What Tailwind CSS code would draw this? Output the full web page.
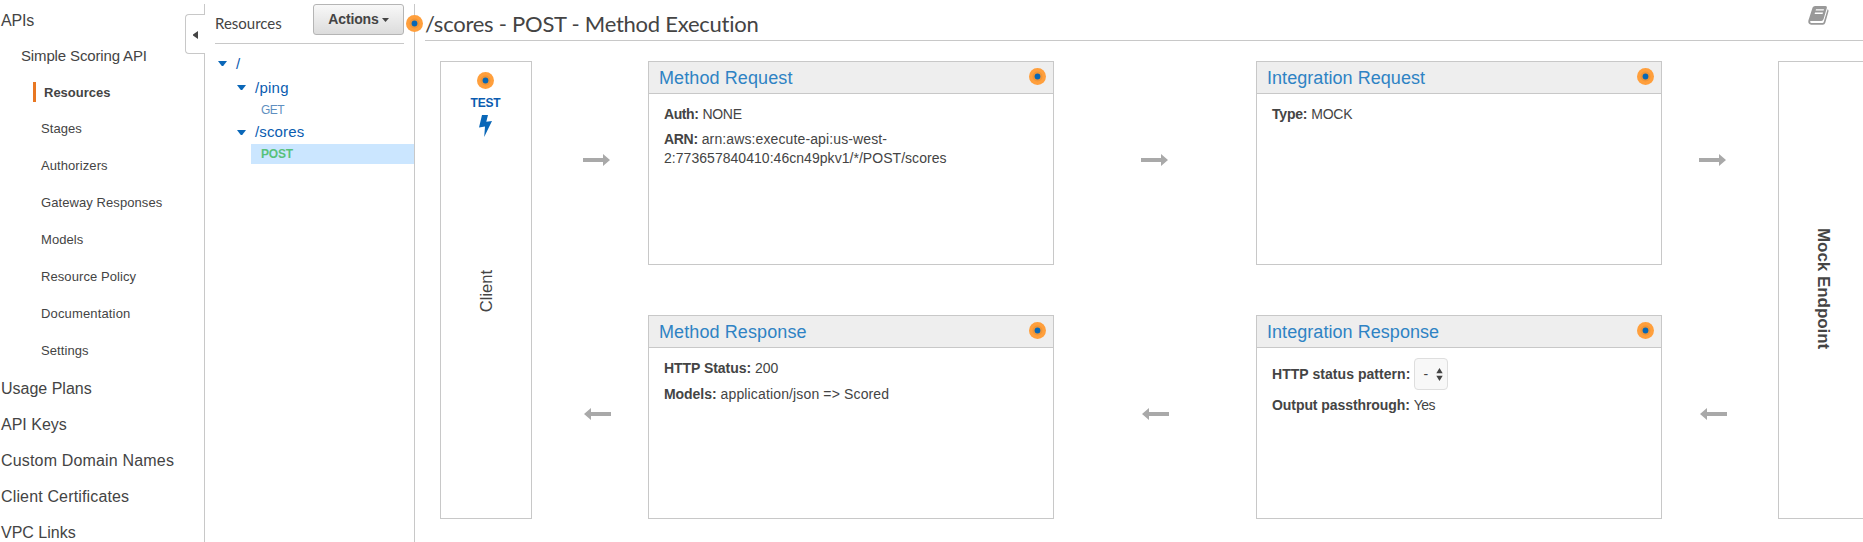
<!DOCTYPE html>
<html lang="en">
<head>
<meta charset="utf-8">
<title>API Gateway</title>
<script src="https://cdn.jsdelivr.net/npm/@tailwindcss/browser@4"></script>
</head>
<body class="bg-white font-['Liberation_Sans',Arial,sans-serif] text-[#444]">
<svg class="hidden">
  <symbol id="dot" viewBox="0 0 17 17"><circle cx="8.5" cy="8.5" r="8.5" fill="#ff9f3c"/><circle cx="8.5" cy="8.5" r="5" fill="#f09536"/><circle cx="8.5" cy="8.5" r="2.9" fill="#0867b5"/></symbol>
  <symbol id="right" viewBox="0 0 27 12"><path d="M0 4h20V0l7 6-7 6V8H0z" fill="#a9a9a9"/></symbol>
  <symbol id="left" viewBox="0 0 27 12"><path d="M27 4H7V0L0 6l7 6V8h20z" fill="#a9a9a9"/></symbol>
  <symbol id="caret" viewBox="0 0 9 5"><path d="M0 0h9L5.200 5H3.800z" fill="#0a67b8"/></symbol>
</svg>
<div class="flex h-[542px] w-[1863px] overflow-hidden">

  <nav class="flex w-[185px] shrink-0 flex-col pt-0.5 text-[16px]">
    <div class="flex h-9 shrink-0 items-center pt-0.5 pl-px tracking-[-0.15px]">APIs</div>
    <div class="flex h-9 shrink-0 items-center pl-[21px] text-[15px] tracking-[-0.14px]">Simple Scoring API</div>
    <div class="flex h-9 shrink-0 items-center pl-[33px] text-[13px] font-bold"><span class="flex h-5 items-center border-l-3 border-[#e87722] pt-px pl-2">Resources</span></div>
    <div class="flex shrink-0 flex-col pl-[41px] text-[13px] tracking-[0.08px]">
      <div class="flex h-[37px] items-center">Stages</div>
      <div class="flex h-[37px] items-center">Authorizers</div>
      <div class="flex h-[37px] items-center">Gateway Responses</div>
      <div class="flex h-[37px] items-center">Models</div>
      <div class="flex h-[37px] items-center">Resource Policy</div>
      <div class="flex h-[37px] items-center tracking-[0.15px]">Documentation</div>
      <div class="flex h-[37px] items-center">Settings</div>
    </div>
    <div class="mt-0.5 flex shrink-0 flex-col pl-px">
      <div class="flex h-9 items-center">Usage Plans</div>
      <div class="flex h-9 items-center">API Keys</div>
      <div class="flex h-9 items-center tracking-[0.17px]">Custom Domain Names</div>
      <div class="flex h-9 items-center tracking-[0.15px]">Client Certificates</div>
      <div class="flex h-9 items-center whitespace-nowrap">VPC Links</div>
    </div>
  </nav>

  <!-- collapse handle and divider -->
  <div class="flex w-5 shrink-0 flex-col">
    <div class="mt-1 h-[10px] w-5 border-r border-[#c8c8c8]"></div>
    <div class="flex h-10 w-5 items-center rounded-l border border-r-0 border-[#c8c8c8] pl-[7px]">
      <svg class="mt-0.5 h-2 w-[5px]" viewBox="0 0 5 8"><path d="M5 0v8L0 4.5v-1z" fill="#444"/></svg>
    </div>
    <div class="w-5 flex-1 border-r border-[#c8c8c8]"></div>
  </div>

  <section class="relative flex w-[210px] shrink-0 flex-col pt-1">
    <div class="mr-[11px] ml-[10px] flex h-10 items-start justify-between border-b border-[#c8c8c8]">
      <h2 class="mt-2 font-[Lato] text-[15px] leading-[22px]">Resources</h2>
      <button class="flex h-[31px] w-[91px] items-center justify-center gap-[3px] rounded-[3px] border border-[#b5b5b5] bg-linear-to-b from-[#f8f8f8] to-[#dcdcdc] text-[14px] font-bold tracking-[-0.15px]">Actions
        <svg class="mt-px h-1 w-[7px]" viewBox="0 0 7 4"><path d="M0 0h7L3.5 4z" fill="#444"/></svg>
      </button>
    </div>
    <div class="flex flex-col text-[15px] text-[#0a5cb0]">
      <div class="mt-[9px] flex h-[22px] items-center gap-[9px] pl-[13px]"><svg class="mb-px h-[5px] w-[9px]"><use href="#caret"/></svg>/</div>
      <div class="mt-0.5 flex h-[22px] items-center gap-[9px] pl-8"><svg class="mb-px h-[5px] w-[9px]"><use href="#caret"/></svg><span class="tracking-[0.25px]">/ping</span></div>
      <div class="mt-px flex h-5 items-center pl-14 text-[12px] tracking-[-0.5px] text-[#5f8fc0]">GET</div>
      <div class="mt-px flex h-[23px] items-center gap-[9px] pl-8"><svg class="h-[5px] w-[9px]"><use href="#caret"/></svg><span class="tracking-[0.15px]">/scores</span></div>
      <div class="ml-[46px] flex h-5 items-center bg-[#cbe6ff] pl-[10px] text-[12px] font-bold tracking-[-0.17px] text-[#57c17b]">POST</div>
    </div>
    <div class="absolute top-1 right-0 bottom-0 w-px bg-[#c8c8c8]"></div>
    <svg class="absolute top-[15px] -right-2 z-10 size-[17px]"><use href="#dot"/></svg>
  </section>

  <main class="flex min-w-0 flex-1 flex-col pl-[10px]">
    <header class="flex h-[41px] items-center justify-between border-b border-[#c8c8c8] pt-[7px]">
      <h1 class="font-[Lato] text-[22px] leading-8 tracking-[-0.25px] whitespace-nowrap">/scores - POST - Method Execution</h1>
      <svg class="mr-[34px] mb-[17px] h-[19px] w-[21px] shrink-0" viewBox="0 0 21 19"><path fill-rule="evenodd" d="M7 0h10.500q1.800 0 1.400 1.800L15.600 13q-.6 2-2.400 2H3q-1.300 0-.8 1.200.3.800 1.300.800h11q1 0 1.300-1.200L19.600 3.300q1.200.6.900 1.900L17.300 16.700q-.7 2-2.400 2H3.200Q0 18.200.3 15.100Q.6 13.400 1.200 12L4.600 1.600Q5.300 0 7 0zM8 3.300l-.4 1.300h8l.4-1.300zM7 6.600l-.4 1.300h8l.4-1.300z" fill="#999"/></svg>
    </header>

    <div class="mt-5 ml-[15px] flex h-[458px]">
      <div class="flex w-[92px] shrink-0 flex-col items-center border border-[#c8c8c8] pt-[10px] pr-px">
        <svg class="size-[17px]"><use href="#dot"/></svg>
        <div class="mt-[6px] text-[12px] leading-4 font-bold tracking-[-0.15px] text-[#0a5cb0]">TEST</div>
        <svg class="mt-1 h-[22px] w-[13px]" viewBox="0 0 13 22"><path d="M3 0h6L7.300 6.700 13 6 5.200 22 6 11.500 0 12.500z" fill="#0a67b8"/></svg>
        <div class="mt-[133px] rotate-180 text-[16.5px] leading-5 [writing-mode:vertical-rl]">Client</div>
      </div>

      <div class="flex w-[116px] shrink-0 flex-col pt-[93px] pl-[51px]">
        <svg class="h-3 w-[27px]"><use href="#right"/></svg>
        <svg class="mt-[242px] ml-px h-3 w-[27px]"><use href="#left"/></svg>
      </div>

      <div class="flex w-[406px] shrink-0 flex-col justify-between text-[14px]">
        <section class="h-[204px] border border-[#c8c8c8]">
          <div class="flex h-8 items-center justify-between border-b border-[#c8c8c8] bg-[#eee] pr-[7px] pl-[10px]">
            <h3 class="pt-0.5 text-[18px] tracking-[0.1px] text-[#2e83c4]">Method Request</h3><svg class="mb-[3px] size-[17px]"><use href="#dot"/></svg>
          </div>
          <div class="px-[15px] pt-[11px] leading-[19px]">
            <p><b class="tracking-[-0.4px]">Auth:</b> <span class="tracking-[-0.3px]">NONE</span></p>
            <p class="mt-[6px]"><b class="tracking-[-0.3px]">ARN:</b> <span class="tracking-[0.12px]">arn:aws:execute-api:us-west-</span><br><span class="tracking-[0.04px]">2:773657840410:46cn49pkv1/*/POST/scores</span></p>
          </div>
        </section>
        <section class="h-[204px] border border-[#c8c8c8]">
          <div class="flex h-8 items-center justify-between border-b border-[#c8c8c8] bg-[#eee] pr-[7px] pl-[10px]">
            <h3 class="pt-0.5 text-[18px] tracking-[0.1px] text-[#2e83c4]">Method Response</h3><svg class="mb-[3px] size-[17px]"><use href="#dot"/></svg>
          </div>
          <div class="px-[15px] pt-[11px] leading-[19px]">
            <p><b class="tracking-[-0.05px]">HTTP Status:</b> 200</p>
            <p class="mt-[7px] tracking-[0.14px]"><b class="tracking-[-0.05px]">Models:</b> application/json =&gt; Scored</p>
          </div>
        </section>
      </div>

      <div class="flex w-[202px] shrink-0 flex-col pt-[93px] pl-[87px]">
        <svg class="h-3 w-[27px]"><use href="#right"/></svg>
        <svg class="mt-[242px] ml-px h-3 w-[27px]"><use href="#left"/></svg>
      </div>

      <div class="flex w-[406px] shrink-0 flex-col justify-between text-[14px]">
        <section class="h-[204px] border border-[#c8c8c8]">
          <div class="flex h-8 items-center justify-between border-b border-[#c8c8c8] bg-[#eee] pr-[7px] pl-[10px]">
            <h3 class="pt-0.5 text-[18px] tracking-[0.05px] text-[#2e83c4]">Integration Request</h3><svg class="mb-[3px] size-[17px]"><use href="#dot"/></svg>
          </div>
          <div class="px-[15px] pt-[11px] leading-[19px]">
            <p><b class="tracking-[-0.2px]">Type:</b> <span class="tracking-[-0.2px]">MOCK</span></p>
          </div>
        </section>
        <section class="h-[204px] border border-[#c8c8c8]">
          <div class="flex h-8 items-center justify-between border-b border-[#c8c8c8] bg-[#eee] pr-[7px] pl-[10px]">
            <h3 class="pt-0.5 text-[18px] tracking-[0.05px] text-[#2e83c4]">Integration Response</h3><svg class="mb-[3px] size-[17px]"><use href="#dot"/></svg>
          </div>
          <div class="px-[15px] pt-[10px] leading-[19px]">
            <div class="flex h-8 items-center gap-1"><b class="tracking-[0.05px]">HTTP status pattern:</b>
              <span class="flex h-8 w-[34px] items-center justify-between rounded border border-[#dedede] bg-[#f8f8f8] pr-1 pl-2 text-[14px]">-
                <svg class="h-[13px] w-[7px]" viewBox="0 0 7 13"><path d="M3.500 0L6.700 5.300H.3zM3.500 13L6.700 7.700H.3z" fill="#444"/></svg>
              </span>
            </div>
            <p class="mt-[6px]"><b class="tracking-[-0.07px]">Output passthrough:</b> <span class="tracking-[-0.6px]">Yes</span></p>
          </div>
        </section>
      </div>

      <div class="flex w-[116px] shrink-0 flex-col pt-[93px] pl-[36.5px]">
        <svg class="h-3 w-[27px]"><use href="#right"/></svg>
        <svg class="mt-[242px] ml-px h-3 w-[27px]"><use href="#left"/></svg>
      </div>

      <div class="flex w-[92px] shrink-0 flex-col items-center border border-[#c8c8c8] pt-[166px] pr-0.5">
        <div class="text-[17px] leading-5 font-bold tracking-[-0.05px] [writing-mode:vertical-rl]">Mock Endpoint</div>
      </div>
    </div>
  </main>
</div>
</body>
</html>
